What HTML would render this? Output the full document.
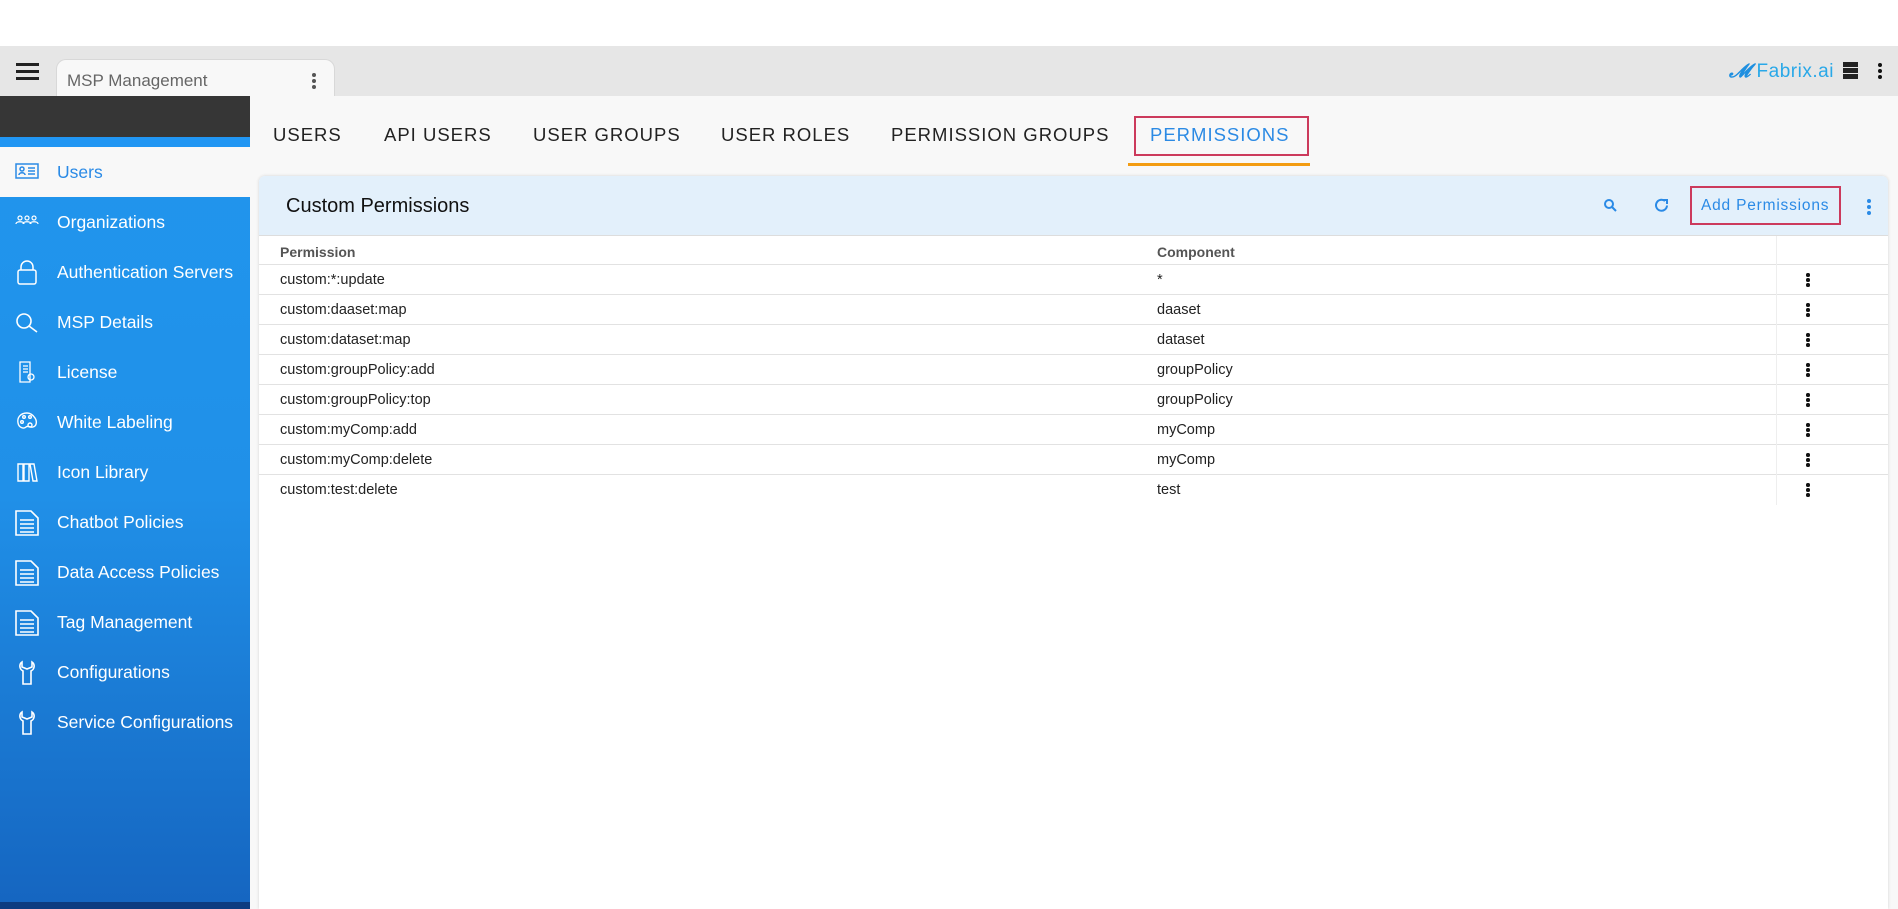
<!DOCTYPE html>
<html><head><style>
*{margin:0;padding:0;box-sizing:border-box}
body{width:1898px;height:909px;overflow:hidden;background:#fff;font-family:"Liberation Sans",sans-serif;position:relative}
.abs{position:absolute}
.top{top:46px;left:0;width:1898px;height:50px;background:#e6e6e6}
.ham{left:16px;top:63px;width:23px}
.ham i{display:block;height:3px;background:#222;margin-bottom:4px}
.tab{left:56px;top:59px;width:279px;height:37px;background:#f8f8f8;border-radius:10px 10px 0 0;border:1px solid #d8d8d8;border-bottom:none;font-size:17px;color:#666;padding:11px 0 0 10px}
.dots{width:4px}
.dots i{display:block;width:4px;height:4px;border-radius:50%;background:#333;margin-bottom:2px}
.side{left:0;top:96px;width:250px;height:813px;background:linear-gradient(#2196ee 0,#2090e8 400px,#1565c0 813px)}
.main{left:250px;top:96px;width:1648px;height:813px;background:#f8f8f8}
.item{position:absolute;left:0;width:250px;height:50px;color:#fff;font-size:17.5px;line-height:50px;padding-left:57px}
.item svg{position:absolute;left:15px;top:13px}
.tabs span{position:absolute;top:124px;font-size:18.5px;letter-spacing:1px;color:#222}
.card{left:259px;top:176px;width:1629px;height:733px;background:#fff;box-shadow:0 0 3px rgba(0,0,0,.15);border-radius:6px 6px 0 0}
.ch{left:259px;top:176px;width:1629px;height:60px;background:#e3f0fb;border-radius:6px 6px 0 0;border-bottom:1px solid #ddd}
.row{position:absolute;left:259px;width:1629px;height:30px;border-bottom:1px solid #e2e2e2;font-size:14.5px;color:#222;line-height:30px}
.row .a{position:absolute;left:21px}.row .b{position:absolute;left:898px}
.row .c{position:absolute;left:1517px;top:0;width:112px;height:30px;border-left:1px solid #eee}
.row .c .dots{position:absolute;left:29px;top:8px;width:3px}
.row .c .dots i{width:3.5px;height:3.5px;background:#111;margin-bottom:1.5px}
</style></head><body>
<div class="abs top"></div>
<div class="abs ham"><i></i><i></i><i></i></div>
<div class="abs tab">MSP Management<div class="abs dots" style="left:255px;top:13px"><i style="background:#555"></i><i style="background:#555"></i><i style="background:#555"></i></div></div>
<div class="abs" style="left:1729px;top:61px;font-size:19px;color:#29a8e8;letter-spacing:.5px"><span style="font-style:italic;font-weight:bold;color:#1e8fe0">𝓜</span> Fabrix.ai</div>
<div class="abs" style="left:1843px;top:62px;width:15px;height:17px">
<div style="height:5px;background:#222;margin-bottom:1px"></div><div style="height:5px;background:#222;margin-bottom:1px"></div><div style="height:5px;background:#222"></div></div>
<div class="abs dots" style="left:1878px;top:63px"><i style="background:#111"></i><i style="background:#111"></i><i style="background:#111"></i></div>

<div class="abs side"></div>
<div class="abs" style="left:0;top:96px;width:250px;height:41px;background:#363636"></div>
<div class="abs" style="left:0;top:137px;width:250px;height:10px;background:#2196f3"></div>
<div class="abs" style="left:0;top:147px;width:250px;height:50px;background:#f8f8f8"></div>
<div class="abs" style="left:0;top:902px;width:250px;height:7px;background:#0d3c80"></div>

<div class="item" style="top:147px;color:#2a8ae6"><svg width="24" height="22" viewBox="0 0 24 22" fill="none" stroke="#2a8ae6" stroke-width="1.5"><rect x="1" y="4" width="22" height="14"/><circle cx="7" cy="9" r="2"/><path d="M4 15c0-3 6-3 6 0M13 8h7M13 11h7M13 14h7"/></svg>Users</div>
<div class="item" style="top:197px"><svg width="24" height="22" viewBox="0 0 24 22" fill="none" stroke="#fff" stroke-width="1.2"><circle cx="5" cy="8" r="2"/><circle cx="12" cy="8" r="2"/><circle cx="19" cy="8" r="2"/><path d="M1 14c0-3 8-3 8 0M8 14c0-3 8-3 8 0M15 14c0-3 8-3 8 0"/></svg>Organizations</div>
<div class="item" style="top:247px"><svg width="24" height="26" viewBox="0 0 24 26" fill="none" stroke="#fff" stroke-width="1.5"><path d="M6 10V7a6 6 0 0 1 12 0v3"/><rect x="3" y="10" width="18" height="14" rx="2"/></svg>Authentication Servers</div>
<div class="item" style="top:297px"><svg width="24" height="24" viewBox="0 0 24 24" fill="none" stroke="#fff" stroke-width="1.6"><circle cx="9" cy="11" r="7"/><path d="M14 16l8 6"/></svg>MSP Details</div>
<div class="item" style="top:347px"><svg width="24" height="24" viewBox="0 0 24 24" fill="none" stroke="#fff" stroke-width="1.3"><path d="M5 2h10v20H5zM8 6h5M8 9h5M8 12h5"/><circle cx="16" cy="17" r="3"/></svg>License</div>
<div class="item" style="top:397px"><svg width="24" height="24" viewBox="0 0 24 24" fill="none" stroke="#fff" stroke-width="1.4"><path d="M12 3C5 3 2 8 3 13c1 5 6 6 8 4s4 1 7 0c4-1 4-6 2-9-2-3-5-5-8-5z"/><circle cx="7" cy="12" r="1.3"/><circle cx="9" cy="7" r="1.3"/><circle cx="15" cy="7" r="1.3"/><circle cx="15" cy="15" r="2"/></svg>White Labeling</div>
<div class="item" style="top:447px"><svg width="24" height="24" viewBox="0 0 24 24" fill="none" stroke="#fff" stroke-width="1.4"><path d="M3 4h5v17H3zM9 4h5v17H9zM15 4l4 0 3 17h-4z"/></svg>Icon Library</div>
<div class="item" style="top:497px"><svg width="24" height="26" viewBox="0 0 24 26" fill="none" stroke="#fff" stroke-width="1.6"><path d="M1 1h15l7 7v17H1zM5 10h14M5 14h14M5 18h14M5 22h14"/></svg>Chatbot Policies</div>
<div class="item" style="top:547px"><svg width="24" height="26" viewBox="0 0 24 26" fill="none" stroke="#fff" stroke-width="1.6"><path d="M1 1h15l7 7v17H1zM5 10h14M5 14h14M5 18h14M5 22h14"/></svg>Data Access Policies</div>
<div class="item" style="top:597px"><svg width="24" height="26" viewBox="0 0 24 26" fill="none" stroke="#fff" stroke-width="1.6"><path d="M1 1h15l7 7v17H1zM5 10h14M5 14h14M5 18h14M5 22h14"/></svg>Tag Management</div>
<div class="item" style="top:647px"><svg width="24" height="26" viewBox="0 0 24 26" fill="none" stroke="#fff" stroke-width="1.6"><path d="M7 2C4 4 4 9 8 11v13h8V11c4-2 4-7 1-9v5l-5 2-5-2z"/></svg>Configurations</div>
<div class="item" style="top:697px"><svg width="24" height="26" viewBox="0 0 24 26" fill="none" stroke="#fff" stroke-width="1.6"><path d="M7 2C4 4 4 9 8 11v13h8V11c4-2 4-7 1-9v5l-5 2-5-2z"/></svg>Service Configurations</div>

<div class="abs main"></div>
<div class="tabs">
<span style="left:273px">USERS</span>
<span style="left:384px">API USERS</span>
<span style="left:533px">USER GROUPS</span>
<span style="left:721px">USER ROLES</span>
<span style="left:891px">PERMISSION GROUPS</span>
<span style="left:1150px;color:#2b8ae4">PERMISSIONS</span>
</div>
<div class="abs" style="left:1134px;top:116px;width:175px;height:40px;border:2.5px solid #cc3a5c"></div>
<div class="abs" style="left:1128px;top:163px;width:182px;height:3px;background:#f39c12"></div>

<div class="abs card"></div>
<div class="abs ch"></div>
<div class="abs" style="left:286px;top:195px;font-size:20px;color:#111">Custom Permissions</div>
<svg class="abs" style="left:1603px;top:198px" width="15" height="15" viewBox="0 0 15 15" fill="none" stroke="#2a8ae6" stroke-width="2"><circle cx="6" cy="6" r="4"/><path d="M9 9l4 4"/></svg>
<svg class="abs" style="left:1653px;top:197px" width="17" height="17" viewBox="0 0 17 17" fill="none" stroke="#2a8ae6" stroke-width="2"><path d="M14 8.5A5.5 5.5 0 1 1 12 4"/><path d="M10 3h4v-0l0 4" /></svg>
<div class="abs" style="left:1690px;top:186px;width:151px;height:39px;border:2.5px solid #cc3a5c"></div>
<div class="abs" style="left:1701px;top:197px;font-size:15.5px;color:#2a8ae6;letter-spacing:.8px">Add Permissions</div>
<div class="abs dots" style="left:1867px;top:199px"><i style="background:#2a8ae6"></i><i style="background:#2a8ae6"></i><i style="background:#2a8ae6"></i></div>

<div class="row" style="top:236px;height:29px;font-weight:bold;color:#555;font-size:14px;line-height:32px"><span class="a">Permission</span><span class="b">Component</span><span class="c" style="height:29px"></span></div>
<div class="row" style="top:265px"><span class="a">custom:*:update</span><span class="b">*</span><span class="c"><span class="dots"><i></i><i></i><i></i></span></span></div>
<div class="row" style="top:295px"><span class="a">custom:daaset:map</span><span class="b">daaset</span><span class="c"><span class="dots"><i></i><i></i><i></i></span></span></div>
<div class="row" style="top:325px"><span class="a">custom:dataset:map</span><span class="b">dataset</span><span class="c"><span class="dots"><i></i><i></i><i></i></span></span></div>
<div class="row" style="top:355px"><span class="a">custom:groupPolicy:add</span><span class="b">groupPolicy</span><span class="c"><span class="dots"><i></i><i></i><i></i></span></span></div>
<div class="row" style="top:385px"><span class="a">custom:groupPolicy:top</span><span class="b">groupPolicy</span><span class="c"><span class="dots"><i></i><i></i><i></i></span></span></div>
<div class="row" style="top:415px"><span class="a">custom:myComp:add</span><span class="b">myComp</span><span class="c"><span class="dots"><i></i><i></i><i></i></span></span></div>
<div class="row" style="top:445px"><span class="a">custom:myComp:delete</span><span class="b">myComp</span><span class="c"><span class="dots"><i></i><i></i><i></i></span></span></div>
<div class="row" style="top:475px;border-bottom:none"><span class="a">custom:test:delete</span><span class="b">test</span><span class="c"><span class="dots"><i></i><i></i><i></i></span></span></div>
</body></html>
